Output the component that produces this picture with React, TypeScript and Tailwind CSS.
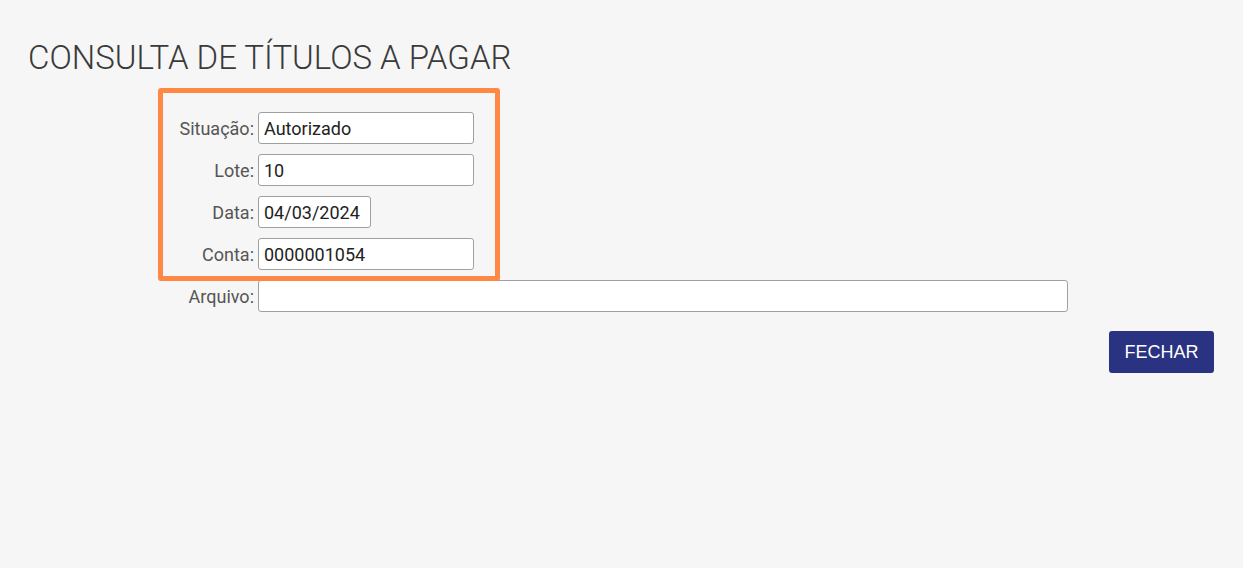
export default function App() {
  const campos = [
    { label: "Situação:", value: "Autorizado", width: "w-[216px]" },
    { label: "Lote:", value: "10", width: "w-[216px]" },
    { label: "Data:", value: "04/03/2024", width: "w-[113px]" },
    { label: "Conta:", value: "0000001054", width: "w-[216px]" },
    { label: "Arquivo:", value: "", width: "w-[810px]" },
  ]

  return (
    <div className="relative min-h-screen bg-[#f6f6f6] font-['Roboto',sans-serif]">
      <div className="px-[28px] pt-[37px]">
        <h1 className="text-[33px] leading-[42px] font-light text-[#3a3a3a]">CONSULTA DE TÍTULOS A PAGAR</h1>
      </div>

      {/* Form */}
      <div className="mt-[33px] grid grid-cols-[254px_auto] gap-x-[4px] gap-y-[10px]">
        {campos.map((c) => (
          <div key={c.label} className="contents">
            <label className="self-center text-right text-[18px] text-[#555]">{c.label}</label>
            <input
              readOnly
              value={c.value}
              className={`${c.width} h-[32px] rounded-[3px] border border-[#a0a0a0] bg-white px-[5px] text-[18px] text-[#222] outline-none`}
            />
          </div>
        ))}
      </div>

      <div className="flex justify-end pr-[29px] pt-[19px]">
        <button className="h-[42px] w-[105px] rounded-[3px] bg-[#2a3282] font-['Liberation_Sans',sans-serif] text-[18px] text-white">
          FECHAR
        </button>
      </div>

      {/* Destaque */}
      <div className="pointer-events-none absolute left-[158px] top-[88px] h-[193px] w-[342px] rounded-[3px] border-[5px] border-[#ff8844]" />
    </div>
  )
}
